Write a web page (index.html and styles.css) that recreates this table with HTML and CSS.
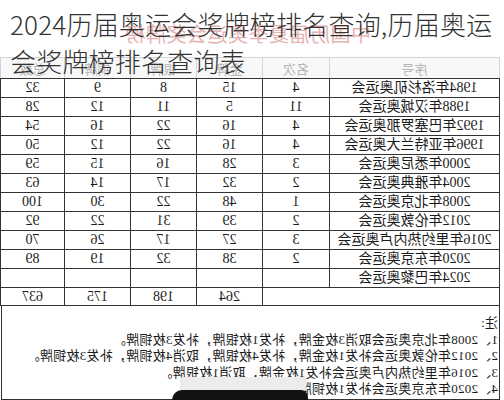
FILE: index.html
```html
<!DOCTYPE html>
<html lang="zh-CN">
<head>
<meta charset="utf-8">
<title>2024历届奥运会奖牌榜排名查询</title>
<link rel="stylesheet" href="styles.css">
</head>
<body>
<div class="page">
  <div class="photo">
    <div class="banner">中国历届夏季奥运会奖牌榜</div>
    <table class="medals">
      <colgroup>
        <col class="c-name"><col class="c-rank"><col class="c-num"><col class="c-num"><col class="c-num"><col class="c-tot">
      </colgroup>
      <thead>
        <tr><th>序号</th><th>名次</th><th>金牌</th><th>银牌</th><th>铜牌</th><th>总数</th></tr>
      </thead>
      <tbody>
        <tr><td>1984年洛杉矶奥运会</td><td>4</td><td>15</td><td>8</td><td>9</td><td>32</td></tr>
        <tr><td>1988年汉城奥运会</td><td>11</td><td>5</td><td>11</td><td>12</td><td>28</td></tr>
        <tr><td>1992年巴塞罗那奥运会</td><td>4</td><td>16</td><td>22</td><td>16</td><td>54</td></tr>
        <tr><td>1996年亚特兰大奥运会</td><td>4</td><td>16</td><td>22</td><td>12</td><td>50</td></tr>
        <tr><td>2000年悉尼奥运会</td><td>3</td><td>28</td><td>16</td><td>15</td><td>59</td></tr>
        <tr><td>2004年雅典奥运会</td><td>2</td><td>32</td><td>17</td><td>14</td><td>63</td></tr>
        <tr><td>2008年北京奥运会</td><td>1</td><td>48</td><td>22</td><td>30</td><td>100</td></tr>
        <tr><td>2012年伦敦奥运会</td><td>2</td><td>39</td><td>31</td><td>22</td><td>92</td></tr>
        <tr><td>2016年里约热内卢奥运会</td><td>3</td><td>27</td><td>17</td><td>26</td><td>70</td></tr>
        <tr><td>2020年东京奥运会</td><td>2</td><td>38</td><td>32</td><td>19</td><td>89</td></tr>
        <tr><td>2024年巴黎奥运会</td><td></td><td></td><td></td><td></td><td></td></tr>
        <tr class="total"><td colspan="2"></td><td>264</td><td>198</td><td>175</td><td>637</td></tr>
      </tbody>
    </table>
    <div class="notes">
      <p>注:</p>
      <p>1、2008年北京奥运会取消3枚金牌，补发1枚银牌，补发3枚铜牌。</p>
      <p>2、2012年伦敦奥运会补发1枚金牌，补发4枚银牌，取消4枚铜牌，补发3枚铜牌。</p>
      <p>3、2016年里约热内卢奥运会补发1枚金牌，取消1枚银牌。</p>
      <p>4、2020年东京奥运会补发1枚铜牌。</p>
    </div>
  </div>
  <h1 class="title">2024历届奥运会奖牌榜排名查询,历届奥运会奖牌榜排名查询表</h1>
  <div class="smudge"></div>
  <div class="blob"></div>
</div>
</body>
</html>
```
FILE: styles.css
```css
html, body {
  margin: 0;
  padding: 0;
  background: #ffffff;
}

.page {
  position: relative;
  width: 504px;
  height: 400px;
  overflow: hidden;
  background: #ffffff;
}

/* the photographed sheet is mirrored left-to-right */
.photo {
  width: 504px;
  transform: scaleX(-1);
  font-family: "Liberation Serif", "Noto Sans CJK SC", serif;
  color: #1a1a1a;
}

.banner {
  height: 57px;
  box-sizing: border-box;
  padding-top: 24px;
  padding-left: 8px;
  text-align: center;
  font-family: "Noto Sans CJK SC", sans-serif;
  font-size: 20px;
  line-height: 20px;
  letter-spacing: 0.5px;
  color: #e6b3b3;
}

.medals {
  margin-left: 4px;
  width: 499px;
  border-collapse: collapse;
  table-layout: fixed;
  font-size: 14px;
}

.c-name { width: 170px; }
.c-rank { width: 67px; }
.c-num { width: 66px; }
.c-tot { width: 64px; }

.medals th {
  height: 20px;
  padding: 0;
  font-family: "Noto Sans CJK SC", sans-serif;
  font-weight: normal;
  font-size: 13px;
  color: #b4b4b4;
  background: #f8f8f8;
  border: 1px solid #d4d4d4;
  border-bottom: 1px solid #333333;
}

.medals td {
  height: 18px;
  padding: 0;
  text-align: center;
  line-height: 16px;
  border: 1px solid #333333;
  white-space: nowrap;
}

.medals .total td {
  height: 17px;
}

.notes {
  margin-left: 4px;
  width: 499px;
  box-sizing: border-box;
  height: 94px;
  padding: 9px 0 0 1px;
  border: 1px solid #333333;
  border-top: none;
  font-size: 13px;
  line-height: 16.5px;
  letter-spacing: 0.25px;
}

.notes p {
  margin: 0;
  white-space: nowrap;
}

.title {
  position: absolute;
  top: 0;
  left: 0;
  width: 504px;
  box-sizing: border-box;
  margin: 0;
  padding: 5px 2px 0 10px;
  font-family: "Noto Sans CJK SC", sans-serif;
  font-weight: 300;
  font-size: 26px;
  line-height: 37px;
  letter-spacing: 0.2px;
  color: #333333;
}

.smudge {
  position: absolute;
  left: 180px;
  top: 377px;
  width: 126px;
  height: 14px;
  background: #ececec;
  border-radius: 3px;
}

.blob {
  position: absolute;
  left: 172px;
  top: 390px;
  width: 136px;
  height: 12px;
  background: #121212;
  border-radius: 10px 7px 0 0;
}
```
